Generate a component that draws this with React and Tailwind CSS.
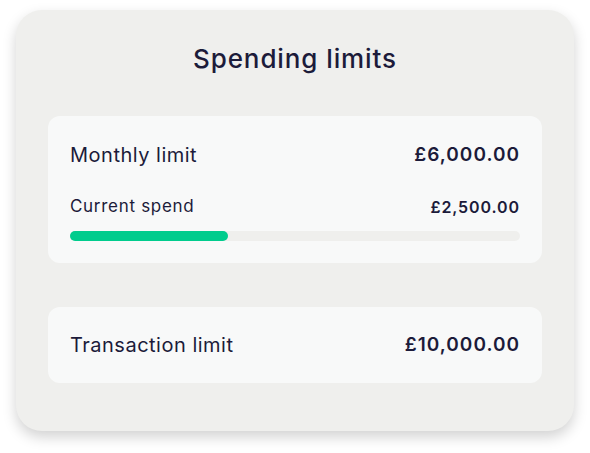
import React from "react";

const limits = {
  monthly: 6000,
  spent: 2500,
  transaction: 10000,
};

function formatGBP(value) {
  return "£" + value.toLocaleString("en-GB", { minimumFractionDigits: 2, maximumFractionDigits: 2 });
}

export default function App() {
  return (
    <div className="min-h-screen bg-white pt-[10px] pl-[16px] font-['Inter',sans-serif] text-[#1c1b3a]">
      <div className="w-[558px] h-[421px] rounded-[26px] bg-[#efefed] px-[32px] shadow-[0_6px_14px_rgba(0,0,0,0.18)]">
        <h1 className="pt-[35px] pb-[43px] text-center text-[26px] leading-[28px] font-medium tracking-[0.9px]">
          Spending limits
        </h1>

        {/* Monthly limit card */}
        <div className="rounded-[12px] bg-[#f8f9f9] px-[22px] pt-[25px] pb-[22px]">
          <div className="flex items-center justify-between h-[28px]">
            <span className="text-[20px] tracking-[0.5px]">Monthly limit</span>
            <span className="text-[19px] font-semibold tracking-[1px]">{formatGBP(limits.monthly)}</span>
          </div>
          <div className="mt-[26px] flex items-center justify-between h-[24px]">
            <span className="text-[17px] tracking-[0.7px]">Current spend</span>
            <span className="text-[16px] font-semibold tracking-[0.9px]">{formatGBP(limits.spent)}</span>
          </div>
          <div className="mt-[12px] h-[10px] rounded-full bg-[#efefed]">
            <div className="h-full w-[35%] rounded-full bg-[#00cc8d]" />
          </div>
        </div>

        {/* Transaction limit card */}
        <div className="mt-[44px] flex h-[76px] items-center justify-between rounded-[12px] bg-[#f8f9f9] px-[22px]">
          <span className="text-[20px] tracking-[0.5px]">Transaction limit</span>
          <span className="text-[19px] font-semibold tracking-[1px]">{formatGBP(limits.transaction)}</span>
        </div>
      </div>
    </div>
  );
}
